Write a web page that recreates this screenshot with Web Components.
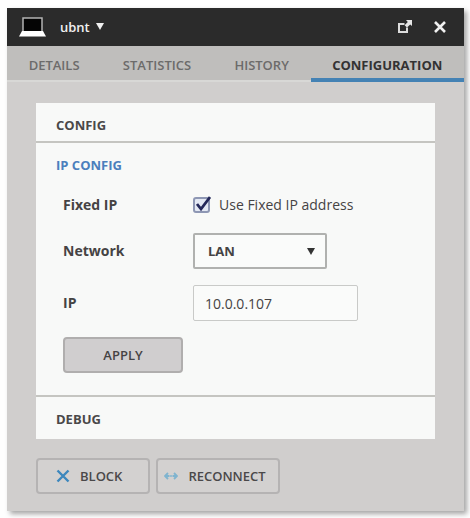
<!DOCTYPE html>
<html lang="en">
<head>
<meta charset="utf-8">
<meta name="viewport" content="width=device-width, initial-scale=1">
<title>ubnt</title>
<style>
  body {
    margin: 0; padding: 8px 6px 7px 7px; background: #fefefe;
    font-family: 'Open Sans', 'Liberation Sans', sans-serif;
    font-size: 14px; line-height: 20px; color: #454344;
  }
</style>
</head>
<body>
<device-window name="ubnt">
  <tab-bar slot="tabs" tabs="DETAILS,STATISTICS,HISTORY,CONFIGURATION" current="CONFIGURATION"></tab-bar>
  <accordion-section heading="CONFIG"></accordion-section>
  <accordion-section heading="IP CONFIG" open><ip-config></ip-config></accordion-section>
  <accordion-section heading="DEBUG"></accordion-section>
  <action-button slot="actions">
    <svg slot="icon" width="14" height="14" viewBox="0 0 14 14" fill="none" stroke="#3d87bd" stroke-width="2.4" aria-hidden="true"><path d="M1.500 1.500l11 11M12.500 1.500l-11 11"/></svg>
    BLOCK
  </action-button>
  <action-button slot="actions" compact>
    <svg slot="icon" width="14" height="14" viewBox="0 0 14 14" fill="none" stroke="#7fb4cf" stroke-width="1.8" aria-hidden="true"><path d="M4 4L1 7l3 3M10 4l3 3-3 3M2 7h3.500M8.500 7H12M6.300 7h1.400"/></svg>
    RECONNECT
  </action-button>
</device-window>

<script>
// ── WINDOW ───────────────────────────────────────
class DeviceWindow extends HTMLElement {
  connectedCallback() {
    this.attachShadow({ mode: 'open' }).innerHTML = `
      <style>
        *, *::before, *::after { box-sizing: border-box; }
        :host { display: block; background: #d0cecd; box-shadow: 3px 3px 5px rgba(0,0,0,0.35); }
        header {
          display: flex; align-items: center; gap: 14px;
          height: 38px; padding: 0 17px 0 12px; background: #2b2b2b; color: #f0f0f0;
        }
        button {
          display: flex; align-items: center; padding: 0; border: 0;
          background: none; color: inherit; font: inherit; cursor: pointer;
        }
        .name { gap: 6px; font-weight: 600; font-size: 13px; }
        .tools { display: flex; gap: 20px; margin-left: auto; }
        .body { padding: 21px 29px 17px; }
        .sections { background: #f8f9f8; }
        .actions { display: flex; gap: 6px; margin-top: 19px; }
      </style>
      <header>
        <svg width="27" height="20" viewBox="0 0 27 20" aria-hidden="true">
          <path d="M4 1h19v14H4z" fill="#050505" stroke="#b4b4b4" stroke-width="1.500"/>
          <path d="M3 14h21l3 5.500H0z" fill="#fff"/>
        </svg>
        <button class="name">${this.getAttribute('name')}
          <svg width="8" height="8" viewBox="0 0 8 8" aria-hidden="true"><path d="M0 0h8L4 7z" fill="#f0f0f0"/></svg>
        </button>
        <div class="tools">
          <button aria-label="Pop out">
            <svg width="16" height="16" viewBox="0 0 16 16" fill="none" aria-hidden="true">
              <path d="M7.500 5H2v8h8V8.500" stroke="#dcdcdc" stroke-width="2"/>
              <path d="M9 1h6v6l-1.800-1.600L10 8.600 7.600 6.200l3.200-3.200z" fill="#e6e6e6"/>
            </svg>
          </button>
          <button aria-label="Close">
            <svg width="14" height="14" viewBox="0 0 14 14" fill="none" aria-hidden="true"><path d="M2 2l10 10M12 2L2 12" stroke="#f0f0f0" stroke-width="2.600"/></svg>
          </button>
        </div>
      </header>
      <slot name="tabs"></slot>
      <div class="body">
        <div class="sections"><slot></slot></div>
        <div class="actions"><slot name="actions"></slot></div>
      </div>
    `;
  }
}

// ── TABS ─────────────────────────────────────────
class TabBar extends HTMLElement {
  connectedCallback() {
    const current = this.getAttribute('current');
    this.attachShadow({ mode: 'open' }).innerHTML = `
      <style>
        :host { display: flex; background: #bfbebc; }
        button {
          flex: 1 1 auto; height: 36px; padding: 4px 0 0; border: 0;
          border-bottom: 2px solid #d8d8d6; background: none;
          font: 600 13px/20px 'Open Sans', sans-serif; color: #6c6b6a; cursor: pointer;
        }
        button[aria-selected="true"] {
          padding-top: 6px; border-bottom: 4px solid #4482b4; color: #333233; font-weight: 700;
        }
      </style>
      ${this.getAttribute('tabs').split(',').map(t =>
        `<button role="tab" aria-selected="${t === current}">${t}</button>`
      ).join('')}
    `;
    this.setAttribute('role', 'tablist');
  }
}

// ── ACCORDION ────────────────────────────────────
class AccordionSection extends HTMLElement {
  connectedCallback() {
    const open = this.hasAttribute('open');
    this.attachShadow({ mode: 'open' }).innerHTML = `
      <style>
        :host { display: block; border-bottom: 2px solid #c5c5c1; }
        :host(:last-of-type) { padding-bottom: 4px; border-bottom: 0; }
        h2 { margin: 0; }
        button {
          display: block; width: 100%; padding: 12px 20px 6px; border: 0; background: none;
          font: 700 13px/20px 'Open Sans', sans-serif; color: #4a4849;
          text-align: left; cursor: pointer;
        }
        :host([open]) button { color: #4b7fbd; }
        .content { padding: 12px 27px 22px; }
      </style>
      <h2><button aria-expanded="${open}">${this.getAttribute('heading')}</button></h2>
      ${open ? '<div class="content"><slot></slot></div>' : ''}
    `;
  }
}

// ── FORM ─────────────────────────────────────────
class FieldRow extends HTMLElement {
  connectedCallback() {
    this.attachShadow({ mode: 'open' }).innerHTML = `
      <style>
        :host { display: grid; grid-template-columns: 130px 1fr; align-items: center; min-height: 24px; }
        .label { font-weight: 700; }
      </style>
      <div class="label"><slot name="label"></slot></div>
      <div><slot></slot></div>
    `;
  }
}

class IpConfig extends HTMLElement {
  connectedCallback() {
    this.attachShadow({ mode: 'open' }).innerHTML = `
      <style>
        *, *::before, *::after { box-sizing: border-box; }
        :host { display: block; }
        form { display: grid; gap: 16px; }
        .check { display: flex; align-items: center; gap: 8px; }
        .stack { display: inline-grid; align-items: center; vertical-align: top; }
        .stack > * { grid-area: 1 / 1; }
        .stack svg { pointer-events: none; }
        input, select, button { margin: 0; font: inherit; color: inherit; }
        input[type="checkbox"] {
          appearance: none; width: 17px; height: 16px;
          border: 2px solid #8e97b4; border-radius: 3px; background: #e4e9f4;
        }
        input:not(:checked) + svg { visibility: hidden; }
        select {
          appearance: none; width: 134px; height: 36px; padding: 0 13px;
          border: 2px solid #b0b1af; border-radius: 2px; background: #fafbfa; font-weight: 700; font-size: 13px;
        }
        .arrow { justify-self: end; margin-right: 12px; }
        input[type="text"] {
          width: 165px; height: 36px; padding: 0 11px;
          border: 1px solid #c9cac8; border-radius: 2px; background: #fafbfa;
        }
        button {
          justify-self: start; width: 120px; height: 36px;
          border: 2px solid #b0aeae; border-radius: 4px; background: #d0cecf;
          font-size: 13px; font-weight: 600; cursor: pointer;
        }
      </style>
      <form onsubmit="return false">
        <field-row>
          <span slot="label">Fixed IP</span>
          <div class="check">
            <span class="stack">
              <input type="checkbox" id="fixed" checked>
              <svg width="18" height="20" viewBox="0 0 18 20" aria-hidden="true"><path d="M4 9l4 5 9-12" fill="none" stroke="#24285a" stroke-width="2.800"/></svg>
            </span>
            <label for="fixed">Use Fixed IP address</label>
          </div>
        </field-row>
        <field-row>
          <label slot="label" for="network">Network</label>
          <span class="stack">
            <select id="network"><option>LAN</option></select>
            <svg class="arrow" width="8" height="7" viewBox="0 0 8 7" aria-hidden="true"><path d="M0 0h8L4 7z" fill="#333"/></svg>
          </span>
        </field-row>
        <field-row>
          <label slot="label" for="ip">IP</label>
          <input type="text" id="ip" value="10.0.0.107">
        </field-row>
        <button>APPLY</button>
      </form>
    `;
  }
}

// ── ACTION BUTTON ────────────────────────────────
class ActionButton extends HTMLElement {
  connectedCallback() {
    this.attachShadow({ mode: 'open' }).innerHTML = `
      <style>
        :host { display: block; }
        button {
          display: flex; align-items: center; gap: 10px; box-sizing: border-box;
          height: 36px; padding: 0 26px 0 18px;
          border: 2px solid #b5b3b3; border-radius: 4px; background: #d3d1d0;
          font: 600 13px/20px 'Open Sans', sans-serif; color: #4a4849; cursor: pointer;
        }
        :host([compact]) button { padding: 0 12px 0 6px; }
      </style>
      <button><slot name="icon"></slot><span><slot></slot></span></button>
    `;
  }
}

customElements.define('device-window', DeviceWindow);
customElements.define('tab-bar', TabBar);
customElements.define('accordion-section', AccordionSection);
customElements.define('field-row', FieldRow);
customElements.define('ip-config', IpConfig);
customElements.define('action-button', ActionButton);
</script>
</body>
</html>
